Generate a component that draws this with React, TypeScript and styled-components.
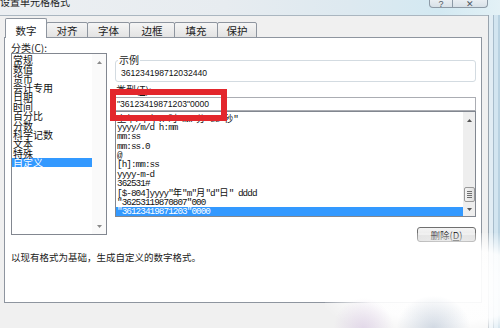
import React from "react";
import styled, { createGlobalStyle } from "styled-components";

const CJK = `"Noto Sans CJK SC", "Noto Sans", sans-serif`;
const SANS = `"Liberation Sans", Arial, "Noto Sans CJK SC", sans-serif`;
const MONO = `"Liberation Mono", "Noto Sans CJK SC", monospace`;

const GlobalStyle = createGlobalStyle`
  html, body { margin: 0; padding: 0; }
  body { width: 500px; height: 328px; overflow: hidden; background: #f0f0f0; }
  *, *::before, *::after { box-sizing: border-box; }
`;

const Screen = styled.div`
  position: relative;
  width: 500px;
  height: 328px;
  overflow: hidden;
  display: flex;
  flex-direction: column;
  font-family: ${CJK};
  color: #111;
  background: #f0f0f0;
`;

const TitleBar = styled.div`
  flex: none;
  height: 15px;
  display: flex;
  align-items: flex-start;
  padding-right: 12px;
  overflow: hidden;
  background: linear-gradient(90deg, #eceff2 0%, #e7ecf0 45%, #dde9f0 70%, #d3e9f2 88%, #e3f1f6 100%);
`;

const Title = styled.div`
  font-size: 10px;
  line-height: 10px;
  margin-top: -3px;
  color: #1a1a1a;
`;

const CaptionGroup = styled.div`
  margin-left: auto;
  display: flex;
  height: 8px;
  border: 1px solid #8d9aa6;
  border-top: none;
  border-radius: 0 0 4px 4px;
  overflow: hidden;
  background: linear-gradient(#e9eef2, #d8e1e8);
`;

const CaptionButton = styled.div<{ $w: number }>`
  width: ${(p) => p.$w}px;
  display: flex;
  justify-content: center;
  align-items: flex-end;
  font-family: ${SANS};
  font-size: 9px;
  line-height: 9px;
  color: #4e5862;
  & + & {
    border-left: 1px solid #8d9aa6;
  }
`;

const CaptionGlyph = styled.span`
  margin-bottom: -2px;
`;

const Body = styled.div`
  flex: 1;
  display: flex;
  min-height: 0;
`;

const Dialog = styled.div`
  width: 488px;
  flex: none;
  display: flex;
  flex-direction: column;
  border-top: 1px solid #aab6c0;
  padding: 2px 0 0 4px;
  background: #f0f0f0;
`;

const GlassFrame = styled.div`
  flex: 1;
  background: linear-gradient(
    90deg,
    #98a3ad 0 1px,
    #e1edf4 1px 5px,
    #a7bccb 5px 6px,
    #d2e5f0 6px 10px,
    #b9d2e1 10px 12px
  );
`;

const TabStrip = styled.div`
  display: flex;
  align-items: flex-end;
  height: 20px;
  padding-left: 1px;
  position: relative;
  z-index: 1;
`;

const Tab = styled.div<{ $active?: boolean; $w: number }>`
  width: ${(p) => p.$w}px;
  height: ${(p) => (p.$active ? 20 : 16)}px;
  display: flex;
  align-items: center;
  justify-content: center;
  padding-top: ${(p) => (p.$active ? 3 : 0)}px;
  border: 1px solid #8e959f;
  border-bottom: ${(p) => (p.$active ? "none" : "1px solid #8e959f")};
  border-radius: 2px 2px 0 0;
  background: ${(p) => (p.$active ? "#ffffff" : "linear-gradient(#f5f5f5, #e3e3e3)")};
  font-size: 10.5px;
  line-height: 11px;
  color: #1a1a1a;
  & + & {
    margin-left: -1px;
  }
`;

const Panel = styled.div`
  width: 478px;
  height: 266px;
  margin-top: -1px;
  border: 1px solid #8e959f;
  background: #ffffff;
  padding: 4px 5px 0 5px;
  display: flex;
  flex-direction: column;
`;

const Columns = styled.div`
  display: flex;
  gap: 8px;
`;

const LeftCol = styled.div`
  width: 97px;
  flex: none;
  display: flex;
  flex-direction: column;
`;

const RightCol = styled.div`
  width: 361px;
  flex: none;
  display: flex;
  flex-direction: column;
`;

const FieldLabel = styled.div<{ $mt?: number }>`
  font-size: 10px;
  line-height: 11px;
  height: 11px;
  margin-top: ${(p) => p.$mt ?? 0}px;
  padding-left: 1px;
  color: #1a1a1a;
  white-space: nowrap;
`;

const Key = styled.span`
  text-decoration: underline;
`;

const ListBox = styled.div<{ $h: number; $ml?: number }>`
  height: ${(p) => p.$h}px;
  margin-left: ${(p) => p.$ml ?? 0}px;
  border: 1px solid #828790;
  background: #ffffff;
  display: flex;
`;

const ListRows = styled.div<{ $pt: number }>`
  flex: 1;
  min-width: 0;
  overflow: hidden;
  padding-top: ${(p) => p.$pt}px;
`;

const CategoryRow = styled.div<{ $selected?: boolean }>`
  height: 9.36px;
  line-height: 9.36px;
  font-size: 10px;
  padding-left: 1px;
  white-space: nowrap;
  color: ${(p) => (p.$selected ? "#ffffff" : "#111")};
  background: ${(p) => (p.$selected ? "#3399ff" : "transparent")};
`;

const TypeRow = styled.div<{ $selected?: boolean }>`
  height: 9.33px;
  line-height: 9.33px;
  font-family: ${MONO};
  font-size: 9.3px;
  letter-spacing: -0.93px;
  padding-left: 1px;
  white-space: nowrap;
  color: ${(p) => (p.$selected ? "#ffffff" : "#111")};
  background: ${(p) => (p.$selected ? "#3399ff" : "transparent")};
`;

const Wide = styled.span`
  font-family: ${CJK};
  letter-spacing: 0;
  font-size: 9.3px;
`;

const ScrollBar = styled.div<{ $w: number; $track: string }>`
  width: ${(p) => p.$w}px;
  flex: none;
  display: flex;
  flex-direction: column;
  background: ${(p) => p.$track};
`;

const ScrollArrow = styled.div<{ $h: number }>`
  height: ${(p) => p.$h}px;
  flex: none;
  display: flex;
  align-items: center;
  justify-content: center;
`;

const ScrollTrack = styled.div`
  flex: 1;
  display: flex;
  flex-direction: column;
  justify-content: flex-end;
  align-items: center;
`;

const Thumb = styled.div`
  width: 11px;
  height: 15px;
  border: 1px solid #9a9a9a;
  border-radius: 2px;
  background: linear-gradient(90deg, #f4f4f4, #e0e0e0);
  display: flex;
  flex-direction: column;
  align-items: center;
  justify-content: center;
  gap: 1px;
`;

const Grip = styled.span`
  width: 5px;
  height: 1px;
  background: #707070;
`;

const SampleGroup = styled.fieldset`
  margin: 13px 0 0 0;
  padding: 3px 5px 2px 5px;
  border: 1px solid #d3dbe1;
  border-radius: 3px;
  min-width: 0;
`;

const SampleLegend = styled.legend`
  padding: 0 1px;
  margin-left: -3px;
  font-size: 10px;
  line-height: 10px;
  color: #1a1a1a;
`;

const SampleValue = styled.div`
  font-family: ${SANS};
  font-size: 8.6px;
  line-height: 11px;
  color: #111;
`;

const TypeInput = styled.div`
  height: 14px;
  margin-top: 2px;
  border: 1px solid #abadb3;
  background: #ffffff;
  padding-left: 1px;
  font-family: ${SANS};
  font-size: 8.6px;
  line-height: 12px;
  color: #111;
  white-space: nowrap;
`;

const ButtonRow = styled.div`
  margin-top: 10px;
  display: flex;
  justify-content: flex-end;
`;

const Button = styled.div`
  width: 59px;
  height: 15px;
  border: 1px solid #707070;
  border-radius: 3px;
  background: linear-gradient(#f4f4f4 0%, #ebebeb 50%, #dddddd 51%, #cfcfcf 100%);
  display: flex;
  align-items: center;
  justify-content: center;
  font-size: 9.5px;
  line-height: 10px;
  color: #111;
`;

const Description = styled.div`
  margin-top: 10px;
  padding-left: 1px;
  font-size: 9.5px;
  line-height: 11px;
  color: #1a1a1a;
`;

const Annotation = styled.div`
  position: absolute;
  left: 110px;
  top: 89px;
  width: 117px;
  height: 32px;
  border: 6px solid #e3262c;
  pointer-events: none;
`;

const Watermark = styled.div`
  position: absolute;
  right: 0;
  bottom: 0;
  width: 175px;
  height: 95px;
  pointer-events: none;
  background:
    radial-gradient(circle at 22% 100%, rgba(214, 196, 226, 0.55) 0%, rgba(214, 196, 226, 0) 18%),
    radial-gradient(ellipse at 62% 100%, rgba(176, 190, 208, 0.55) 0%, rgba(176, 190, 208, 0) 24%),
    radial-gradient(ellipse at 70% 55%, rgba(255, 255, 255, 0.97) 0%, rgba(255, 255, 255, 0.9) 50%, rgba(255, 255, 255, 0) 78%);
`;

const ArrowIcon = ({ dir, color }: { dir: "up" | "down"; color: string }) => (
  <svg width="5" height="3" viewBox="0 0 5 3">
    <polygon points={dir === "up" ? "2.5,0 5,3 0,3" : "0,0 5,0 2.5,3"} fill={color} />
  </svg>
);

const categories = [
  "常规",
  "数值",
  "货币",
  "会计专用",
  "日期",
  "时间",
  "百分比",
  "分数",
  "科学记数",
  "文本",
  "特殊",
  "自定义",
];

const types = [
  '上午/下午h"时"mm"分"ss"秒"',
  "yyyy/m/d h:mm",
  "mm:ss",
  "mm:ss.0",
  "@",
  "[h]:mm:ss",
  "yyyy-m-d",
  "362531#",
  '[$-804]yyyy"年"m"月"d"日" dddd',
  '"36253119870807"000',
  '"36123419871203"0000',
];

const tabs = [
  { label: "数字", w: 42 },
  { label: "对齐", w: 42 },
  { label: "字体", w: 43 },
  { label: "边框", w: 46 },
  { label: "填充", w: 44 },
  { label: "保护", w: 40 },
];

const renderMixed = (s: string) =>
  s
    .split(/([\u3000-\u9fff\uff00-\uffef]+)/)
    .filter(Boolean)
    .map((run, i) => (/[\u3000-\u9fff\uff00-\uffef]/.test(run) ? <Wide key={i}>{run}</Wide> : <React.Fragment key={i}>{run}</React.Fragment>));

export default function App() {
  return (
    <>
      <GlobalStyle />
      <Screen>
        <TitleBar>
          <Title>设置单元格格式</Title>
          <CaptionGroup>
            <CaptionButton $w={22}>
              <CaptionGlyph>?</CaptionGlyph>
            </CaptionButton>
            <CaptionButton $w={35}>
              <CaptionGlyph>✕</CaptionGlyph>
            </CaptionButton>
          </CaptionGroup>
        </TitleBar>
        <Body>
          <Dialog>
            <TabStrip>
              {tabs.map((t, i) => (
                <Tab key={t.label} $w={t.w} $active={i === 0}>
                  {t.label}
                </Tab>
              ))}
            </TabStrip>
            <Panel>
              <Columns>
                <LeftCol>
                  <FieldLabel>
                    分类(<Key>C</Key>):
                  </FieldLabel>
                  <ListBox $h={182} $ml={1}>
                    <ListRows $pt={1}>
                      {categories.map((c) => (
                        <CategoryRow key={c} $selected={c === "自定义"}>
                          {c}
                        </CategoryRow>
                      ))}
                    </ListRows>
                    <ScrollBar $w={14} $track="#fafafa">
                      <ScrollArrow $h={16}>
                        <ArrowIcon dir="up" color="#8a8a8a" />
                      </ScrollArrow>
                      <ScrollTrack />
                      <ScrollArrow $h={16}>
                        <ArrowIcon dir="down" color="#8a8a8a" />
                      </ScrollArrow>
                    </ScrollBar>
                  </ListBox>
                </LeftCol>
                <RightCol>
                  <SampleGroup>
                    <SampleLegend>示例</SampleLegend>
                    <SampleValue>361234198712032440</SampleValue>
                  </SampleGroup>
                  <FieldLabel $mt={2}>
                    类型(<Key>T</Key>):
                  </FieldLabel>
                  <TypeInput>"36123419871203"0000</TypeInput>
                  <ListBox $h={106}>
                    <ListRows $pt={1.7}>
                      {types.map((t, i) => (
                        <TypeRow key={t} $selected={i === types.length - 1}>
                          {renderMixed(t)}
                        </TypeRow>
                      ))}
                    </ListRows>
                    <ScrollBar $w={12} $track="#eeeeee">
                      <ScrollArrow $h={16}>
                        <ArrowIcon dir="up" color="#555" />
                      </ScrollArrow>
                      <ScrollTrack>
                        <Thumb>
                          <Grip />
                          <Grip />
                          <Grip />
                          <Grip />
                        </Thumb>
                      </ScrollTrack>
                      <ScrollArrow $h={14}>
                        <ArrowIcon dir="down" color="#555" />
                      </ScrollArrow>
                    </ScrollBar>
                  </ListBox>
                  <ButtonRow>
                    <Button>
                      删除(<Key>D</Key>)
                    </Button>
                  </ButtonRow>
                </RightCol>
              </Columns>
              <Description>以现有格式为基础，生成自定义的数字格式。</Description>
            </Panel>
          </Dialog>
          <GlassFrame />
        </Body>
        <Annotation />
        <Watermark />
      </Screen>
    </>
  );
}
